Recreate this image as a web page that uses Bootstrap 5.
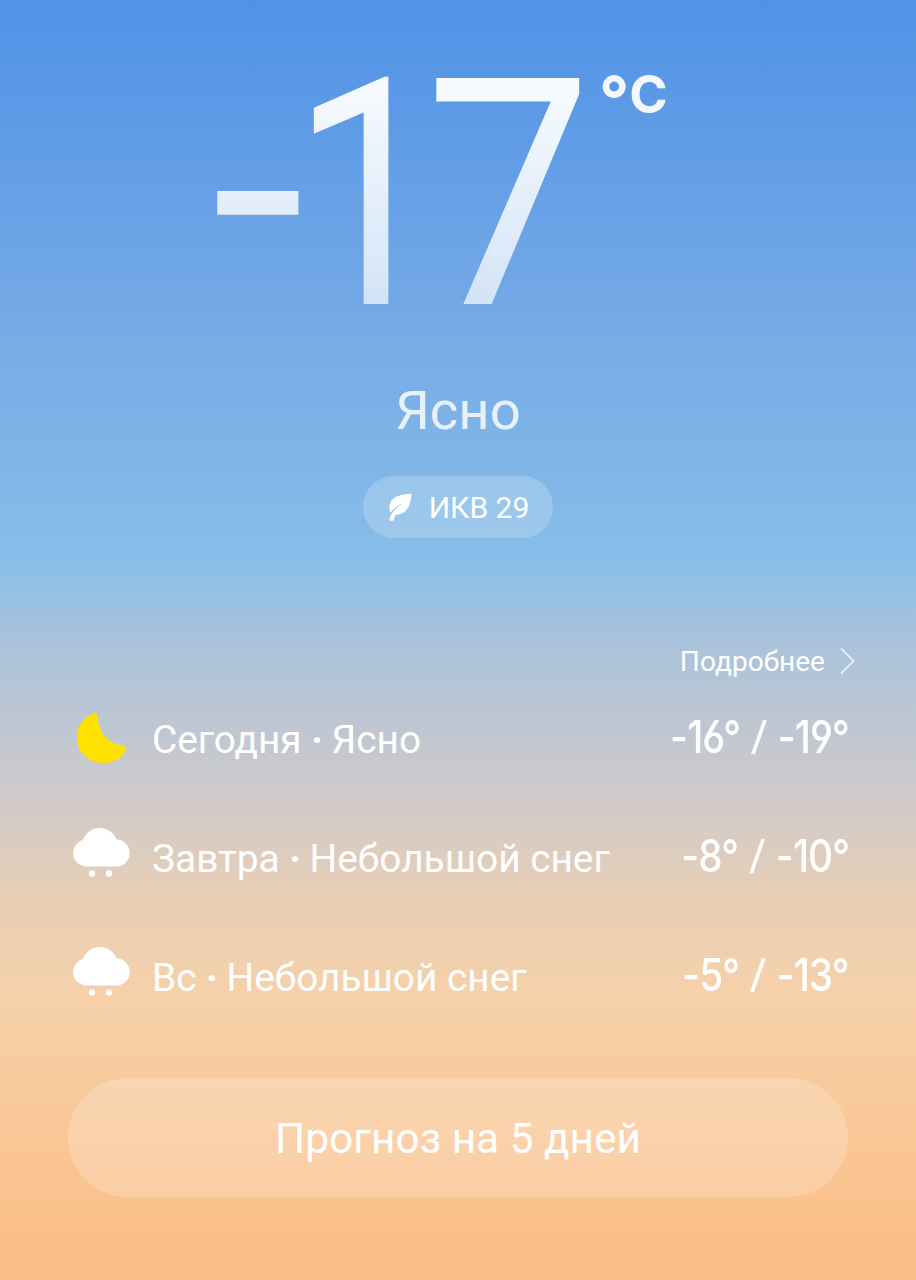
<!DOCTYPE html>
<html lang="ru">
<head>
  <meta charset="UTF-8" />
  <meta name="viewport" content="width=device-width, initial-scale=1.0"/>
  <title>Погода</title>
  <link href="https://cdn.jsdelivr.net/npm/bootstrap@5.3.3/dist/css/bootstrap.min.css" rel="stylesheet" />
  <style>
    body {
      font-family: Roboto, "Noto Sans", sans-serif;
      color: #fff;
    }
    .weather {
      height: 1280px;
      background: linear-gradient(to bottom, #5092e6 0, #74a9e6 310px, #87bde8 555px, #a9c3dc 640px, #b8c5d5 700px, #cfcacb 795px, #e6ceb6 890px, #f5d1aa 990px, #f9c796 1130px, #fabc84 1280px);
    }
    .current {
      height: 350px;
      padding: 8px 0 0 211px;
    }
    .glyph {
      flex: none;
      font-size: 318px;
      line-height: 376px;
      font-weight: 400;
      transform-origin: left;
      background: linear-gradient(to bottom, #f8fbff 70px, #d3e4f7 296px);
      -webkit-background-clip: text;
      background-clip: text;
      color: transparent;
    }
    .glyph-minus {
      width: 95px;
      margin: -5px -15px 0 0;
      letter-spacing: -13px;
      transform: scaleX(1.07);
    }
    .glyph-one {
      width: 134px;
      letter-spacing: -24px;
      transform: scaleX(.86);
    }
    .glyph-seven {
      width: 172px;
      letter-spacing: -6px;
      transform: scaleX(.935);
    }
    .unit {
      font: 700 52px/60px Inter, sans-serif;
      margin: 57px 0 0 2px;
      color: #f4f8fe;
    }
    .unit-ring {
      font-size: 66px;
      padding-top: 4px;
    }
    .condition {
      height: 67px;
      margin-top: 27px;
      font-size: 54.5px;
      line-height: 66px;
      color: rgba(255, 255, 255, .82);
    }
    .aqi {
      width: 190px;
      height: 62px;
      margin-top: 32px;
      font-size: 30px;
      background: rgba(255, 255, 255, .2);
    }
    .details {
      height: 40px;
      margin-top: 104px;
      padding-right: 61px;
      font-size: 28.1px;
      line-height: 40px;
    }
    .details svg {
      margin: 0 0 2px 15px;
    }
    .forecast {
      margin-top: -4px;
      padding: 0 67px 0 72px;
    }
    .day {
      height: 119px;
      font-size: 38.8px;
    }
    .day-name {
      padding-top: 5px;
    }
    .day-name b {
      letter-spacing: -1px;
    }
    .day-icon {
      width: 58px;
      margin-right: 22px;
    }
    .temps {
      font: 500 45px/52px Inter, sans-serif;
      font-feature-settings: "cv03", "cv04";
      letter-spacing: -1px;
      padding-bottom: 1px;
      transform: scaleX(.86);
      transform-origin: right;
    }
    .slash {
      display: inline-block;
      font-size: 39px;
      font-weight: 600;
      line-height: 40px;
      margin: 0 4px;
      transform: translateY(-3px) skewX(-8deg);
    }
    .btn-forecast {
      width: 780px;
      height: 119px;
      margin-top: 43px;
      padding-top: 9px;
      font-size: 42.4px;
      color: #fff;
      background: rgba(255, 255, 255, .2);
    }
  </style>
</head>
<body>
  <main class="weather d-flex flex-column overflow-hidden">
    <!-- Current temperature -->
    <section class="current d-flex align-items-start">
      <div class="glyph glyph-minus">-</div>
      <div class="glyph glyph-one">1</div>
      <div class="glyph glyph-seven">7</div>
      <div class="unit d-flex"><span class="unit-ring">°</span><span>C</span></div>
    </section>
    <div class="condition text-center">Ясно</div>

    <!-- Air quality -->
    <div class="aqi d-flex align-items-center justify-content-center rounded-pill align-self-center">
      <svg class="me-3" width="26" height="30" viewBox="0 0 26 30" fill="#fff">
        <path d="M24.500 1.500C15 2.500 2.500 4 2.500 15.500c0 2 .2 3.500.9 5C7 16.500 10 14 15.500 11 11 15 6 18 3.300 24.500L2.600 27c-.3 2.500 3.500 2.800 4.200.6l1.700-4.800C20 22.500 24 13 24.500 1.500z"/>
      </svg>
      <span>ИКВ 29</span>
    </div>

    <div class="details d-flex align-items-center justify-content-end">
      <span>Подробнее</span>
      <svg width="15" height="28" viewBox="0 0 15 28" fill="none" stroke="#fff" stroke-width="1.6" stroke-opacity=".85">
        <path d="M1 1.500 13.500 14 1 26.500"/>
      </svg>
    </div>

    <!-- Daily forecast -->
    <section class="forecast">
      <div class="day d-flex align-items-center">
        <svg class="day-icon" width="58" height="58" viewBox="0 0 58 58" fill="#ffe100">
          <path d="M20 4.800C24 3 25.500 4 25.500 7.500 26 21 36 36 50 36c4 0 5 2 3.500 5.500C49 50 41 54 31 54 17 54 5 43 5 29 5 17 11.500 8 20 4.800z"/>
        </svg>
        <span class="day-name">Сегодня <b>·</b> Ясно</span>
        <span class="temps ms-auto">-16° <span class="slash">/</span> -19°</span>
      </div>
      <div class="day d-flex align-items-center">
        <svg class="day-icon" width="58" height="58" viewBox="0 0 58 58" fill="#fff">
          <path d="M14.500 38.500a13.500 13.500 0 0 1-3.500-26.500C14 4.500 20 0 27.500 0S42 4.500 44.500 11.500a13.500 13.500 0 0 1-.5 27z"/>
          <circle cx="20" cy="45.500" r="3.200"/>
          <circle cx="37" cy="45.500" r="3.200"/>
        </svg>
        <span class="day-name">Завтра <b>·</b> Небольшой снег</span>
        <span class="temps ms-auto">-8° <span class="slash">/</span> -10°</span>
      </div>
      <div class="day d-flex align-items-center">
        <svg class="day-icon" width="58" height="58" viewBox="0 0 58 58" fill="#fff">
          <path d="M14.500 38.500a13.500 13.500 0 0 1-3.500-26.500C14 4.500 20 0 27.500 0S42 4.500 44.500 11.500a13.500 13.500 0 0 1-.5 27z"/>
          <circle cx="20" cy="45.500" r="3.200"/>
          <circle cx="37" cy="45.500" r="3.200"/>
        </svg>
        <span class="day-name">Вс <b>·</b> Небольшой снег</span>
        <span class="temps ms-auto">-5° <span class="slash">/</span> -13°</span>
      </div>
    </section>

    <button type="button" class="btn btn-forecast rounded-pill border-0 align-self-center">Прогноз на 5 дней</button>
  </main>

  <script src="https://cdn.jsdelivr.net/npm/bootstrap@5.3.3/dist/js/bootstrap.bundle.min.js"></script>
</body>
</html>
